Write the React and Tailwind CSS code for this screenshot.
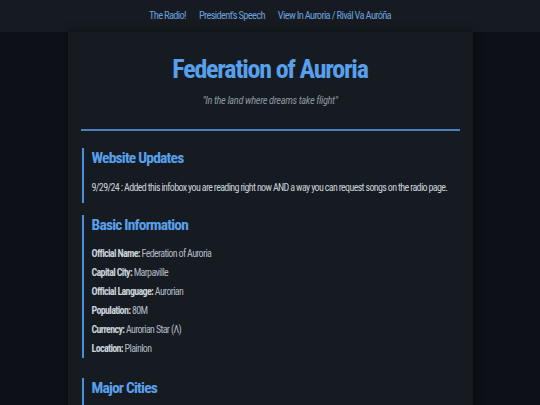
export default function App() {
  const items = [
    ["Official Name:", "Federation of Auroria"],
    ["Capital City:", "Marpaville"],
    ["Official Language:", "Aurorian"],
    ["Population:", "80M"],
    ["Currency:", "Aurorian Star (\u039B)"],
    ["Location:", "Plainlon"],
  ];
  return (
    <div
      className="min-h-[405px] bg-[#0d1117] text-[#c9d1d9] [font-stretch:condensed]"
      style={{ fontFamily: "Roboto, 'Liberation Sans', sans-serif" }}
    >
      <nav className="h-8 bg-[#161b22] flex items-center justify-center gap-[13px] text-[10.5px] tracking-[-0.7px] text-[#6a9fda]">
        <a>The Radio!</a>
        <a>President's Speech</a>
        <a>View In Auroria / Rivál Va Auróña</a>
      </nav>
      <main className="w-[405px] mx-auto bg-[#161b22] px-[13px] pb-8 min-h-[373px] shadow-[0_0_8px_rgba(0,0,0,0.5)]">
        <header className="pt-[15px] text-center">
          <h1 className="text-[26px] leading-[44px] font-bold tracking-[-1.2px] text-[#58a0ec]">Federation of Auroria</h1>
          <p className="mt-[3px] text-[10.5px] leading-[14px] italic tracking-[-0.4px] text-[#8b949e]">"In the land where dreams take flight"</p>
          <div className="mt-[21px] h-[2px] bg-[#4a80bf]" />
        </header>
        <section className="mt-[17px] ml-[1px] border-l-2 border-[#4a8fdc] pl-[8px] pb-[6px]">
          <h2 className="text-[15.5px] leading-[20px] font-bold tracking-[-0.8px] text-[#58a0ec]">Website Updates</h2>
          <p className="mt-[10px] text-[10px] leading-[19px] tracking-[-0.65px]">
            9/29/24 : Added this infobox you are reading right now AND a way you can request songs on the radio page.
          </p>
        </section>
        <section className="mt-[12px] ml-[1px] border-l-2 border-[#4a8fdc] pl-[8px]">
          <h2 className="text-[15.5px] leading-[21px] font-bold tracking-[-0.8px] text-[#58a0ec]">Basic Information</h2>
          <div className="mt-[8px] text-[10px] leading-[19px] tracking-[-0.65px] text-[#b1bac4]">
            {items.map(([k, v]) => (
              <p key={k}>
                <strong className="font-bold text-[#c9d1d9]">{k}</strong> {v}
              </p>
            ))}
          </div>
        </section>
        <section className="mt-[20px] ml-[1px] border-l-2 border-[#4a8fdc] pl-[8px]">
          <h2 className="text-[15.5px] leading-[20px] font-bold tracking-[-0.8px] text-[#58a0ec]">Major Cities</h2>
          <div className="h-10" />
        </section>
      </main>
    </div>
  );
}
